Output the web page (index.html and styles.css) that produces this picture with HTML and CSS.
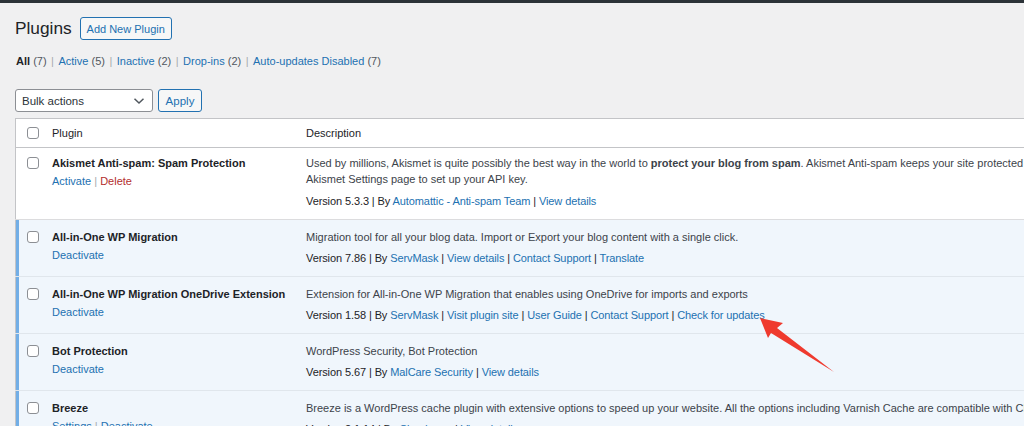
FILE: index.html
```html
<!DOCTYPE html>
<html lang="en">
<head>
<meta charset="utf-8">
<title>Plugins</title>
<link rel="stylesheet" href="styles.css">
</head>
<body>
<div class="topbar"></div>
<div class="wrap">
  <div class="head">
    <h1 class="title">Plugins</h1>
    <span class="btn btn-add">Add New Plugin</span>
  </div>
  <ul class="filters">
    <li><b class="cur">All</b> <span class="count">(7)</span></li>
    <li class="sep">|</li>
    <li><a>Active</a> <span class="count">(5)</span></li>
    <li class="sep">|</li>
    <li><a>Inactive</a> <span class="count">(2)</span></li>
    <li class="sep">|</li>
    <li><a>Drop-ins</a> <span class="count">(2)</span></li>
    <li class="sep">|</li>
    <li><a>Auto-updates Disabled</a> <span class="count">(7)</span></li>
  </ul>
  <div class="bulk">
    <div class="select"><span>Bulk actions</span>
      <svg class="chev" width="12" height="8" viewBox="0 0 12 8"><path d="M1.5 1.8 L6 6 L10.5 1.8" fill="none" stroke="#50575e" stroke-width="1.5"/></svg>
    </div>
    <span class="btn btn-apply">Apply</span>
  </div>
  <table class="plugins">
    <thead>
      <tr>
        <th class="c-check"><span class="cb"></span></th>
        <th class="c-name">Plugin</th>
        <th class="c-desc">Description</th>
      </tr>
    </thead>
    <tbody>
      <tr class="inactive">
        <td class="c-check"><span class="cb"></span></td>
        <td class="c-name">
          <div class="pname">Akismet Anti-spam: Spam Protection</div>
          <div class="acts"><a>Activate</a> <span class="sep">|</span> <a class="del">Delete</a></div>
        </td>
        <td class="c-desc">
          <p class="desc">Used by millions, Akismet is quite possibly the best way in the world to <b>protect your blog from spam</b>. Akismet Anti-spam keeps your site protected even while you sleep. To get started: activate the Akismet plugin and then go to your<br>Akismet Settings page to set up your API key.</p>
          <p class="ver">Version 5.3.3 | By <a>Automattic - Anti-spam Team</a> | <a>View details</a></p>
        </td>
      </tr>
      <tr class="active">
        <td class="c-check"><span class="cb"></span></td>
        <td class="c-name">
          <div class="pname">All-in-One WP Migration</div>
          <div class="acts"><a>Deactivate</a></div>
        </td>
        <td class="c-desc">
          <p class="desc">Migration tool for all your blog data. Import or Export your blog content with a single click.</p>
          <p class="ver">Version 7.86 | By <a>ServMask</a> | <a>View details</a> | <a>Contact Support</a> | <a>Translate</a></p>
        </td>
      </tr>
      <tr class="active">
        <td class="c-check"><span class="cb"></span></td>
        <td class="c-name">
          <div class="pname">All-in-One WP Migration OneDrive Extension</div>
          <div class="acts"><a>Deactivate</a></div>
        </td>
        <td class="c-desc">
          <p class="desc">Extension for All-in-One WP Migration that enables using OneDrive for imports and exports</p>
          <p class="ver">Version 1.58 | By <a>ServMask</a> | <a>Visit plugin site</a> | <a>User Guide</a> | <a>Contact Support</a> | <a>Check for updates</a></p>
        </td>
      </tr>
      <tr class="active">
        <td class="c-check"><span class="cb"></span></td>
        <td class="c-name">
          <div class="pname">Bot Protection</div>
          <div class="acts"><a>Deactivate</a></div>
        </td>
        <td class="c-desc">
          <p class="desc">WordPress Security, Bot Protection</p>
          <p class="ver">Version 5.67 | By <a>MalCare Security</a> | <a>View details</a></p>
        </td>
      </tr>
      <tr class="active">
        <td class="c-check"><span class="cb"></span></td>
        <td class="c-name">
          <div class="pname">Breeze</div>
          <div class="acts"><a>Settings</a> <span class="sep">|</span> <a>Deactivate</a></div>
        </td>
        <td class="c-desc">
          <p class="desc">Breeze is a WordPress cache plugin with extensive options to speed up your website. All the options including Varnish Cache are compatible with Cloudflare.</p>
          <p class="ver">Version 2.1.14 | By <a>Cloudways</a> | <a>View details</a></p>
        </td>
      </tr>
    </tbody>
  </table>
</div>
<svg class="arrow" width="90" height="70" viewBox="755 312 90 70">
  <polygon points="760,318 783,323 777,328 834,372 771,333 768,338" fill="#ef3a2e"/>
</svg>
</body>
</html>
```

FILE: styles.css
```css
html, body {
  margin: 0;
  padding: 0;
  overflow: hidden;
  background: #f0f0f1;
}
body {
  position: relative;
  width: 1024px;
  height: 426px;
  font-family: "Liberation Sans", Arial, sans-serif;
  font-size: 11px;
  color: #1d2327;
}
a { color: #2271b1; text-decoration: none; }

.topbar {
  height: 3px;
  background: #2c3338;
}
.wrap {
  padding-left: 15px;
}
.head {
  display: flex;
  align-items: center;
  gap: 8px;
  margin-top: 14px;
  height: 23px;
}
.title {
  margin: 0;
  font-size: 17.3px;
  font-weight: 400;
  color: #1d2327;
  line-height: 23px;
}
.btn {
  display: inline-flex;
  align-items: center;
  box-sizing: border-box;
  height: 23px;
  border: 1px solid #2271b1;
  border-radius: 3px;
  background: #f6f7f7;
  color: #2271b1;
  font-size: 11px;
}
.btn-add { width: 92px; justify-content: center; }

.filters {
  list-style: none;
  margin: 13px 0 0 1px;
  padding: 0;
  display: flex;
  gap: 4px;
  line-height: 16px;
  font-size: 11px;
  color: #50575e;
}
.filters .cur { color: #1d2327; font-weight: 700; }
.filters .sep { color: #a7aaad; padding: 0 0.5px; }

.bulk {
  display: flex;
  gap: 5px;
  margin-top: 20px;
}
.select {
  box-sizing: border-box;
  width: 138px;
  height: 23px;
  background: #fff;
  border: 1px solid #8c8f94;
  border-radius: 3px;
  display: flex;
  align-items: center;
  justify-content: space-between;
  padding: 0 7px 0 6px;
  color: #2c3338;
  font-size: 11.5px;
}
.btn-apply { width: 44px; justify-content: center; font-size: 11.5px; }

.plugins {
  margin-top: 6px;
  width: 1500px;
  border-collapse: collapse;
  table-layout: fixed;
  background: #fff;
  border: 1px solid #c3c4c7;
}
.plugins th {
  font-weight: 400;
  text-align: left;
  padding: 6px 0;
  line-height: 16px;
  color: #1d2327;
  border-bottom: 1px solid #c3c4c7;
  vertical-align: top;
}
.plugins td {
  vertical-align: top;
  padding: 7px 0 10px 0;
  line-height: 16px;
  border-bottom: 1px solid #dcdcde;
}
.plugins .c-check { width: 36px; padding-left: 0; }
.plugins .c-name { width: 244px; }
.plugins .c-desc { padding-left: 10px; }
.cb {
  display: block;
  box-sizing: border-box;
  width: 12px;
  height: 12px;
  margin: 2px 0 0 11px;
  border: 1px solid #8c8f94;
  border-radius: 3px;
  background: #fff;
}
.plugins tr.active td {
  background: #f0f6fc;
  border-bottom-color: #e0e6ec;
  padding-top: 9px;
}
.plugins tr.active td.c-check {
  box-shadow: inset 3px 0 0 #72aee6;
}
.pname { font-weight: 700; color: #1d2327; }
.acts { margin-top: 2px; }
.acts .sep { color: #a7aaad; }
.acts .del { color: #b32d2e; }
.desc { margin: 0; color: #3c434a; }
.ver { margin: 6px 0 0; color: #1d2327; letter-spacing: -0.1px; }
.plugins tr.active .ver { margin-top: 5px; }

.arrow {
  position: absolute;
  left: 755px;
  top: 312px;
}
```
